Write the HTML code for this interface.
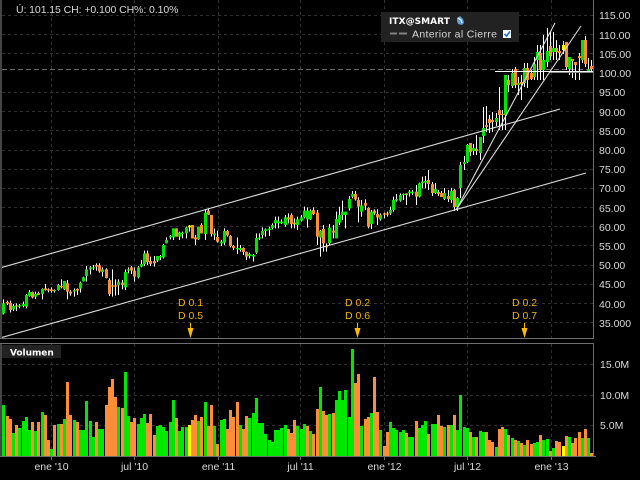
<!DOCTYPE html>
<html>
<head>
<meta charset="utf-8">
<style>
html,body{margin:0;padding:0;background:#000;width:640px;height:480px;overflow:hidden}
svg{display:block;position:absolute;left:0;top:0}
text{font-family:"Liberation Sans",sans-serif;font-size:10.5px;fill:#d8d8d8}
.b{font-family:"DejaVu Sans",sans-serif;font-weight:bold;font-size:9px;fill:#fff}
.o{fill:#f2b200}
.w{fill:none;stroke:#fff;stroke-width:3}
.g{fill:none;stroke:#00e400;stroke-width:9}
.r{fill:none;stroke:#ff8c38;stroke-width:9}
.y{fill:none;stroke:#ffff00;stroke-width:9}
</style>
</head>
<body>
<svg width="640" height="480" viewBox="0 0 640 480" xmlns="http://www.w3.org/2000/svg">
<rect width="640" height="480" fill="#000"/>
<!-- grid -->
<g shape-rendering="crispEdges" stroke="#303030" stroke-dasharray="3 3" fill="none">
<path d="M2 15.5H593M2 34.5H593M2 53.5H593M2 92.5H593M2 111.5H593M2 130.5H593M2 150.5H593M2 169.5H593M2 188.5H593M2 207.5H593M2 226.5H593M2 245.5H593M2 265.5H593M2 284.5H593M2 303.5H593M2 322.5H593"/>
<path d="M51.5 0V338M134.5 0V338M218.5 0V338M300.5 0V338M384.5 0V338M467.5 0V338M551.5 0V338"/>
<path d="M2 364.5H593M2 395.5H593M2 425.5H593"/>
<path d="M51.5 344V456M134.5 344V456M218.5 344V456M300.5 344V456M384.5 344V456M467.5 344V456M551.5 344V456"/>
</g>
<path d="M2 69.5H593" stroke="#6a6a6a" stroke-dasharray="5 3" shape-rendering="crispEdges"/>
<!-- candles left -->
<g transform="translate(0 180) scale(.333333)">
<path class="w" d="M3 395V408M10.5 358V403M22.5 362V375M31.5 362V397M40.5 372V393M49.5 370V393M58.5 372V385M70.5 365V382M79.5 342V385M88.5 330V350M97.5 335V355M106.5 335V357M115.5 335V345M127.5 325V358M136.5 312V332M145.5 325V337M154.5 322V338M163.5 328V338M175.5 312V332M184.5 298V325M193.5 303V330M202.5 300V358M211.5 330V347M223.5 325V350M232.5 325V345M241.5 305V338M250.5 290V305M259.5 258V305M271.5 258V283M280.5 255V270M289.5 250V272M298.5 250V278M307.5 262V290M319.5 265V295M328.5 295V348M337.5 268V350M346.5 298V347M355.5 298V345M367.5 300V328M376.5 268V330M385.5 262V280M394.5 258V282M403.5 262V305M415.5 258V295M424.5 240V262M433.5 212V258M442.5 212V255M451.5 230V258M463.5 228V260M472.5 228V246M481.5 225V240M490.5 192V235M499.5 172V190M511.5 165V178M520.5 145V180M529.5 145V170M538.5 155V180M547.5 155V175M559.5 140V175M568.5 135V155M577.5 135V175M586.5 165V195M595.5 140V180M604.5 130V160M616.5 90V180M625.5 85V105M634.5 105V170"/>
<path class="g" d="M3 397V405M10.5 370V400M40.5 378V388M58.5 376V380M70.5 372V378M79.5 345V380M88.5 336V348M106.5 342V350M127.5 327V342M163.5 330V334M175.5 315V330M193.5 303V328M223.5 330V335M241.5 308V326M250.5 292V304M259.5 268V288M271.5 262V268M280.5 262V265M307.5 268V276M355.5 305V316M376.5 276V322M385.5 268V272M415.5 262V292M424.5 252V260M433.5 220V252M472.5 228V242M481.5 228V232M490.5 195V232M499.5 180V190M511.5 168V172M520.5 145V172M538.5 158V170M547.5 158V162M559.5 142V160M595.5 140V178M616.5 98V162"/>
<path class="r" d="M22.5 366V371M31.5 369V390M49.5 376V380M97.5 336V352M115.5 339V345M136.5 325V330M145.5 328V332M154.5 328V333M184.5 318V322M202.5 310V335M211.5 335V341M232.5 327V332M289.5 255V260M298.5 256V274M319.5 268V294M328.5 300V342M337.5 316V320M346.5 316V320M367.5 308V315M394.5 262V272M403.5 272V290M442.5 220V246M451.5 243V252M463.5 243V250M529.5 145V170M577.5 135V175M586.5 172V178M604.5 135V160M625.5 92V104M634.5 105V162"/>
<path class="y" d="M568.5 137V142"/>
</g>
<!-- candles middle -->
<g transform="translate(213 160) scale(.333333)">
<path class="w" d="M4.5 205V240M13.5 212V248M25.5 240V258M34.5 205V255M43.5 210V230M52.5 225V262M61.5 255V270M73.5 232V282M82.5 255V275M91.5 262V285M100.5 275V300M109.5 278V295M121.5 282V305M130.5 220V282M139.5 220V240M148.5 202V235M157.5 205V230M169.5 200V228M178.5 190V208M187.5 170V205M196.5 170V205M205.5 178V192M217.5 165V200M226.5 160V190M235.5 160V205M244.5 175V205M253.5 170V210M265.5 165V185M274.5 140V175M283.5 142V203M292.5 148V180M301.5 142V165M313.5 150V255M322.5 210V290M331.5 195V275M340.5 250V275M349.5 192V255M361.5 195V235M370.5 155V235M379.5 140V195M388.5 122V180M397.5 155V205M409.5 108V152M418.5 93V115M427.5 93V122M436.5 112V187M445.5 120V170M457.5 118V150M466.5 142V205M475.5 150V207M484.5 148V165M493.5 148V195M502.5 160V182M514.5 158V175M523.5 155V170M532.5 140V165M541.5 110V155M550.5 102V125M562.5 100V125M571.5 100V120M580.5 100V135M589.5 90V110M598.5 90V105M610.5 75V135M619.5 68V112M628.5 50V85M637.5 48V85"/>
<path class="g" d="M4.5 220V226M25.5 245V250M34.5 213V248M73.5 264V268M82.5 264V270M109.5 282V288M121.5 285V290M130.5 234V278M139.5 232V236M148.5 213V225M157.5 208V213M169.5 205V210M178.5 195V204M187.5 180V190M196.5 184V190M205.5 185V190M217.5 172V195M253.5 178V195M265.5 172V182M274.5 152V172M283.5 152V178M292.5 152V178M322.5 212V233M349.5 203V250M370.5 177V235M379.5 165V188M388.5 155V165M397.5 155V165M409.5 117V145M418.5 102V110M445.5 136V155M475.5 155V192M502.5 165V178M532.5 150V160M541.5 120V150M550.5 117V122M562.5 105V122M571.5 102V105M589.5 95V100M598.5 95V100M619.5 70V110M628.5 65V70M637.5 63V68"/>
<path class="r" d="M13.5 231V245M43.5 213V226M52.5 228V258M61.5 258V264M91.5 264V276M100.5 276V290M226.5 172V178M235.5 165V192M244.5 188V193M301.5 150V162M313.5 158V230M331.5 207V250M340.5 258V262M361.5 212V218M427.5 102V118M436.5 120V140M457.5 129V137M466.5 144V200M484.5 152V160M493.5 162V172M514.5 160V164M523.5 160V164M580.5 100V105M610.5 95V110"/>
</g>
<!-- candles right -->
<g transform="translate(1.5 0)" fill="none">
<path stroke="#fff" d="M427 170V190M431 182V196M434 183V194M437 190V196M440 191V197M443 188V200M447 190V202M450 188V203M453 189V211M456 197V211M459 162V198M463 156V170M466 144V163M469 143V156M472 144V155M475 135V155M479 137V160M482 107V143M485 106V132M488 115V133M491 112V132M495 113V126M498 87V130M501 110V130M504 75V130M507 75V92M511 69V88M514 67V88M517 77V95M520 75V100M523 63V87M526 63V88M530 70V80M533 57V80M536 45V80M539 45V80M542 35V80M546 28V67M549 32V60M552 32V60M555 40V60M558 45V60M565 42V70M568 57V75M571 59V78M574 62V80M578 53V80M581 40V63M584 36V67M587 58V70M590 60V72"/>
<path stroke="#ffff00" d="M562 41V54"/>
<path stroke="#00e400" stroke-width="3" d="M434 189V193M443 193V199M450 191V200M456 198V207M459 165V188M463 162V164M466 145V162M472 148V151M479 137V153M482 128V136M495 118V122M504 75V115M511 73V86M517 83V85M523 68V83M533 64V77M536 52V60M542 60V70M546 51V62M552 48V52M568 57V69M581 40V60M587 69V71"/>
<path stroke="#ff8c38" stroke-width="3" d="M427 180V184M431 184V193M437 192V194M440 193V197M447 196V199M453 190V207M469 143V152M475 149V151M485 125V127M488 119V123M491 120V122M498 110V115M501 114V115M507 80V85M514 69V85M520 82V84M526 68V80M530 73V79M539 53V70M549 46V56M555 48V52M558 51V53M565 42V67M571 59V61M574 62V65M578 56V58M584 40V64M590 66V69"/>
<path stroke="#ffff00" stroke-width="3" d="M562 45V50"/>
</g>
<!-- lines -->
<g fill="none" stroke="#dcdcdc" stroke-width="1.100">
<path d="M0 268L560 109"/>
<path d="M0 338L586 173"/>
<path d="M456 210L555 23"/>
<path d="M456 210L581 26"/>
</g>
<path d="M495 71.5H593" stroke="#fff" shape-rendering="crispEdges"/>
<path d="M550 72.5H593" stroke="#888" shape-rendering="crispEdges"/>
<!-- D labels and arrows -->
<text x="178" y="306" class="o">D 0.1</text><text x="178" y="319" class="o">D 0.5</text>
<text x="345" y="306" class="o">D 0.2</text><text x="345" y="319" class="o">D 0.6</text>
<text x="512" y="306" class="o">D 0.2</text><text x="512" y="319" class="o">D 0.7</text>
<g fill="#ffba00">
<path d="M190 323h1v5h2.500l-3 10l-3 -10h2.500z"/>
<path d="M357 323h1v5h2.500l-3 10l-3 -10h2.500z"/>
<path d="M524 323h1v5h2.500l-3 10l-3 -10h2.500z"/>
</g>
<!-- volume bars -->
<g transform="translate(1.5 0)" fill="none" stroke-width="3">
<path stroke="#00e800" d="M2 405V456M12 433V456M18 428V456M22 421V456M25 417V456M28 430V456M34 431V456M41 412V456M50 449V456M57 424V456M63 419V456M73 420V456M79 430V456M82 430V456M85 401V456M89 421V456M92 437V456M98 429V456M101 429V456M117 407V456M124 372V456M127 416V456M137 424V456M140 418V456M143 414V456M156 426V456M159 425V456M162 427V456M165 431V456M169 422V456M172 400V456M178 431V456M181 427V456M185 427V456M197 421V456M204 402V456M213 426V456M220 420V456M223 419V456M239 425V456M248 418V456M252 413V456M255 398V456M258 423V456M261 423V456M264 434V456M268 440V456M271 442V456M274 430V456M277 430V456M280 428V456M284 425V456M296 426V456M300 429V456M303 424V456M309 431V456M319 387V456M328 414V456M335 400V456M338 391V456M341 400V456M344 390V456M348 417V456M351 349V456M360 426V456M370 413V456M379 430V456M389 422V456M392 428V456M395 430V456M399 432V456M402 430V456M408 437V456M411 437V456M418 428V456M421 425V456M424 421V456M431 424V456M434 424V456M443 427V456M450 425V456M456 430V456M459 395V456M463 427V456M466 428V456M472 437V456M479 431V456M482 432V456M495 447V456M504 429V456M511 438V456M517 441V456M523 445V456M533 443V456M536 442V456M542 440V456M546 439V456M552 448V456M568 437V456M581 438V456M587 438V456"/>
<path stroke="#ff8c38" d="M6 416V456M9 419V456M15 425V456M31 422V456M37 422V456M44 415V456M47 440V456M53 425V456M60 424V456M66 382V456M69 415V456M76 422V456M95 422V456M105 405V456M108 387V456M111 379V456M114 397V456M121 408V456M130 422V456M133 418V456M146 423V456M149 414V456M153 435V456M175 418V456M191 420V456M194 415V456M200 417V456M207 426V456M210 405V456M216 444V456M226 429V456M229 410V456M232 417V456M236 402V456M242 429V456M245 416V456M287 429V456M290 433V456M293 420V456M306 426V456M312 434V456M316 409V456M322 411V456M325 415V456M332 413V456M354 383V456M357 374V456M364 419V456M367 417V456M373 377V456M376 412V456M383 446V456M386 432V456M405 433V456M415 421V456M427 434V456M437 415V456M440 426V456M447 425V456M453 415V456M469 432V456M475 437V456M485 432V456M488 440V456M491 442V456M498 429V456M501 427V456M507 435V456M514 440V456M520 443V456M526 440V456M530 444V456M539 435V456M549 451V456M555 441V456M558 442V456M565 436V456M571 443V456M574 438V456M578 432V456M584 429V456M590 453V456"/>
<path stroke="#ffff00" d="M188 425V456M562 446V456"/>
</g>
<rect x="0" y="431" width="2" height="25" fill="#00e800"/>
<!-- frame -->
<g shape-rendering="crispEdges" fill="none">
<path stroke="#444" stroke-width="2" d="M1 0V338M1 343V456"/>
<path stroke="#6e6e6e" d="M593.500 0V339M593.500 343V457"/>
<path stroke="#6e6e6e" d="M0 338.500H594M0 343.500H594M0 456.500H596"/>
<path stroke="#6e6e6e" d="M51.500 457V460M134.500 457V460M218.500 457V460M300.500 457V460M384.500 457V460M467.500 457V460M551.500 457V460"/>
</g>
<!-- legend -->
<rect x="381" y="12" width="138" height="30" fill="#222"/>
<text x="389" y="24" class="b" style="letter-spacing:.05px">ITX@SMART</text>
<g><path d="M457 18l3-2 3 3 1 4-2 2-4-1-1-3z" fill="#5c9ee0"/><path d="M458 18l3 2 1 3" stroke="#e8f2ff" stroke-width="1.200" fill="none"/></g>
<path d="M390 33.500h7M399 33.500h8" stroke="#808080" stroke-width="2" shape-rendering="crispEdges"/>
<text x="412" y="37.500" style="letter-spacing:.33px">Anterior al Cierre</text>
<rect x="503" y="30" width="8" height="8" fill="#f4f8ff"/>
<path d="M504.500 34l2 2 3.500-4.500" stroke="#2a6fd0" stroke-width="1.600" fill="none"/>
<!-- header -->
<text x="16" y="13" style="letter-spacing:-.08px">Ú: 101.15 CH: +0.100 CH%: 0.10%</text>
<!-- volume tag -->
<rect x="2" y="345" width="59" height="13" fill="#222"/>
<text x="10" y="355.500" class="b" style="letter-spacing:-.05px">Volumen</text>
<!-- price axis -->
<g>
<text x="599" y="19">115.00</text><text x="599" y="39">110.00</text><text x="599" y="58">105.00</text><text x="599" y="77">100.00</text>
<text x="599" y="96">95.00</text><text x="599" y="116">90.00</text><text x="599" y="135">85.00</text><text x="599" y="154">80.00</text>
<text x="599" y="173">75.00</text><text x="599" y="192">70.00</text><text x="599" y="212">65.00</text><text x="599" y="231">60.00</text>
<text x="599" y="250">55.00</text><text x="599" y="269">50.00</text><text x="599" y="288">45.00</text><text x="599" y="308">40.00</text>
<text x="599" y="327">35.000</text>
<text x="600" y="368">15.0M</text><text x="600" y="399">10.0M</text><text x="600" y="429">5.0M</text>
</g>
<!-- dates -->
<g text-anchor="middle">
<text x="51.500" y="470">ene '10</text><text x="134.500" y="470">jul '10</text><text x="218.500" y="470">ene '11</text><text x="300.500" y="470">jul '11</text>
<text x="384.500" y="470">ene '12</text><text x="467.500" y="470">jul '12</text><text x="551.500" y="470">ene '13</text>
</g>
</svg>
</body>
</html>
